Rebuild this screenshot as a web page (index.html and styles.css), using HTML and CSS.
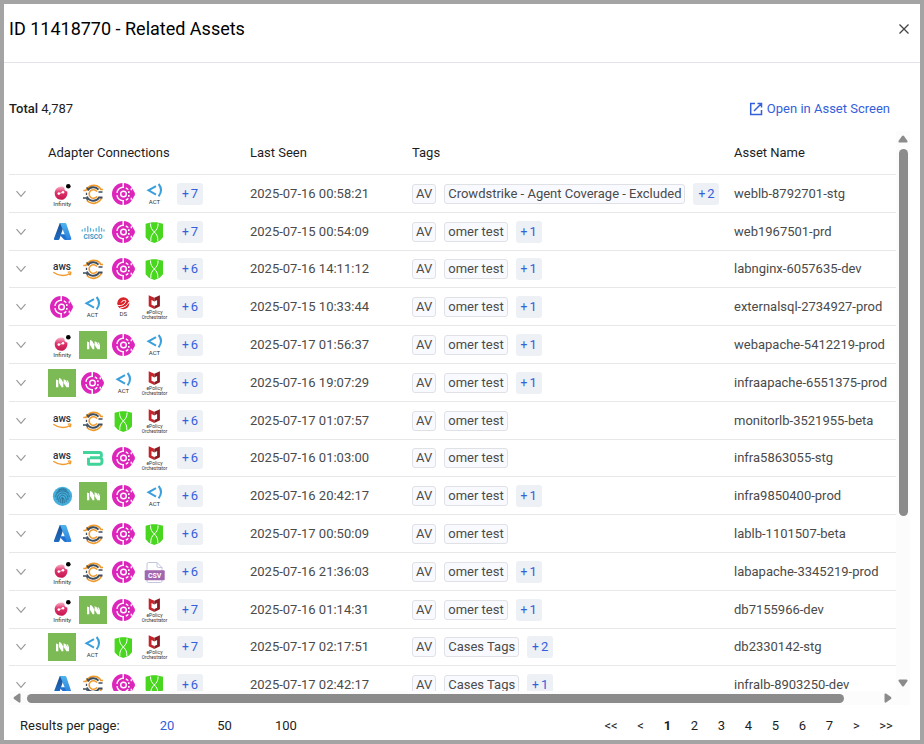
FILE: index.html
```html
<!DOCTYPE html>
<html lang="en">
<head>
<meta charset="utf-8">
<meta name="viewport" content="width=device-width, initial-scale=1">
<title>Related Assets</title>
<link rel="stylesheet" href="styles.css">
</head>
<body>
<svg class="gradients" aria-hidden="true">
  <defs>
    <linearGradient id="g-inf" x1="0" y1="0" x2="0" y2="1"><stop offset="0" stop-color="#f6b3c6"/><stop offset=".45" stop-color="#e0326d"/><stop offset="1" stop-color="#c4174f"/></linearGradient>
    <linearGradient id="g-az1" x1="0" y1="0" x2="0" y2="1"><stop offset="0" stop-color="#1a4f94"/><stop offset="1" stop-color="#1e6cc0"/></linearGradient>
    <linearGradient id="g-az2" x1="0" y1="0" x2="0" y2="1"><stop offset="0" stop-color="#4fb4ee"/><stop offset="1" stop-color="#2a7fdc"/></linearGradient>
  </defs>
</svg>
<svg class="sprite" aria-hidden="true">
  <symbol id="infinity" viewBox="0 0 28 28">
    <path fill="url(#g-inf)" d="M13 6.500c1.500 0 2.600.5 3.500 1.300-.4 1.900.6 3.300 2.800 3.600.8 4.500-2 8.300-6.100 8.300-3.700 0-6.500-2.900-6.500-6.500S9.500 6.500 13 6.500z"/>
    <circle cx="10.800" cy="13.600" r="1.300" fill="#fff"/><circle cx="15" cy="12.300" r="1.300" fill="#fff"/>
    <path d="M11 13.600l4-1.300" stroke="#fff" stroke-width=".8"/>
    <circle cx="20.300" cy="6.300" r="2.300" fill="#000"/>
    <text class="mark" x="14.300" y="25.500" font-size="6">Infinity</text>
  </symbol>
  <symbol id="chain" viewBox="0 0 28 28">
    <g fill="none">
      <path stroke="#f09a2c" stroke-width="1.700" d="M4.300 10.500h2.500A9 9 0 0 1 20.500 7.300M22.700 17.500A9 9 0 0 1 7.800 20.500M20.500 7.300l1.200 2.200h2.300"/>
      <path stroke="#3f4e5e" stroke-width="1.900" d="M19.500 9.700A6.700 6.700 0 0 0 8.600 10.500M8 16.500a6.700 6.700 0 0 0 12 1h3.500"/>
      <path stroke="#3f4e5e" stroke-width="1.300" d="M7.500 12.800v2.200M4 18h3.200l1.500 2.300M19.500 12h4M7.500 7.500l2 1.500"/>
      <path stroke="#f09a2c" stroke-width="1.600" d="M18 11.600a4.300 4.300 0 1 0 0 4.800"/>
    </g>
  </symbol>
  <symbol id="orbit" viewBox="0 0 28 28">
    <path fill="#dc25bb" d="M13 3c3.800 0 6.200 1.300 8 3.500l3.600 6.100c.5.900.5 1.900 0 2.800L21 21.500c-1.800 2.200-4.200 3.500-8 3.500A11 11 0 0 1 13 3z"/>
    <path fill="none" stroke="#fff" stroke-width="1.400" d="M12.800 7.200a6.900 6.900 0 0 0-5.900 5.600M6.900 15.200a6.900 6.900 0 0 0 5.900 5.600M15.800 7.800a6.900 6.900 0 0 1 2.400 1.900M15.800 20.200a6.900 6.900 0 0 0 2.400-1.900"/>
    <path fill="#fff" d="M12.500 2.500h1.500v5.500h-1.500zM12.500 20h1.500v5.500h-1.500z"/>
    <circle cx="13.500" cy="14" r="2.800" fill="none" stroke="#fff" stroke-width="1.400"/>
    <path fill="#fff" d="M18 11.300h1.600v1.600H18zM18 15.100h1.600v1.600H18zM20.600 8.300h1.400v2h-1.400zM20.600 17.700h1.400v2h-1.400z"/>
  </symbol>
  <symbol id="act" viewBox="0 0 28 28">
    <path fill="none" stroke="#3a9fdd" stroke-width="2" d="M15 6.200L7.500 10.300l7.500 4.300M17.600 4c3 3.700 3 8.500 0 12.300"/>
    <text class="mark" x="13.500" y="23.700" font-size="6">ACT</text>
  </symbol>
  <symbol id="azure" viewBox="0 0 28 28">
    <path fill="url(#g-az1)" d="M11.800 5h5L11.400 21.200c-.2.500-.6.800-1.100.8H7c-.8 0-1.300-.7-1-1.500z"/>
    <path fill="#1e6fce" d="M18.800 16.200H11l5 5.300c.4.300.8.500 1.300.5h3.500z"/>
    <path fill="url(#g-az2)" d="M12 5h5.200c.5 0 .9.300 1.100.8l5 14.800c.2.700-.3 1.400-1.100 1.400h-4.800c.8 0 1.200-.7 1-1.500z"/>
  </symbol>
  <symbol id="cisco" viewBox="0 0 28 28">
    <path stroke="#5db3da" stroke-width="1.300" stroke-linecap="round" d="M3.200 11.800v1.200M6 10.500v2.500M8.800 8.700v5M11.600 10.500v2.500M14.400 11.800v1.200M17.200 10.500v2.500M20 8.700v5M22.600 10.500v2.500M25 11.800v1.200"/>
    <text class="mark mark-cisco" x="14" y="20.500" font-size="6.500">CISCO</text>
  </symbol>
  <symbol id="shield" viewBox="0 0 28 28">
    <path fill="#49d61f" d="M13.300 4.200c2.900 0 5.900.5 8.700 1.600v13.400l-3.300 3.500-5.400 2.300-5.400-2.300-3.300-3.500V5.800c2.800-1.100 5.800-1.600 8.700-1.600z"/>
    <path fill="none" stroke="#fff" stroke-width="1" d="M9.500 5.500c0 4 1 5.800 3.800 8.500s3.700 4.800 3.500 9M17.100 5.500c0 4-1 5.800-3.800 8.500s-3.700 4.800-3.500 9"/>
  </symbol>
  <symbol id="aws" viewBox="0 0 28 28">
    <text class="mark mark-aws" x="14" y="14.500" font-size="10">aws</text>
    <path fill="none" stroke="#f09a2c" stroke-width="1.400" d="M5.300 17.300c5 3.600 11.500 3.900 16.600 1.300M19.800 17.300c1-.5 2.300-.5 3 0 .1 1.100-.4 2.200-1.200 3"/>
  </symbol>
  <symbol id="trend" viewBox="0 0 28 28">
    <circle cx="13.300" cy="10.300" r="6" fill="#d9242b"/>
    <path fill="none" stroke="#fff" stroke-width="1" d="M7.300 12.500c4.500.5 7.500-1 8.700-4.500-1.800-1.200-4-.3-4.800 1.500M10 15c4.500-.3 7.500-2.500 9-6"/>
    <text class="mark" x="13.300" y="22.500" font-size="6">DS</text>
  </symbol>
  <symbol id="epolicy" viewBox="0 0 28 28">
    <path fill="#c4262b" d="M7.700 2.200l5.600 2.600v3.700l-2.800-1.400v4.600l2.800 1.300v2.900l-5.600-2.600z"/>
    <path fill="#8b1b22" d="M18.900 2.200l-5.600 2.600v3.700l2.800-1.400v4.600L13.300 13v2.900l5.600-2.600z"/>
    <text class="mark" x="13.500" y="21.300" font-size="5">ePolicy</text>
    <text class="mark" x="13.500" y="25.800" font-size="4.600">Orchestrator</text>
  </symbol>
  <symbol id="mosaic" viewBox="0 0 28 28">
    <path fill="#7cba56" d="M0 0h28v28H0z"/>
    <path fill="#fff" d="M8 10.500l2.300.8v7H8zM11 9l2 .8 2.300 3.700v4.800h-1.600L11 14zM15.600 10.300l1.800.8 3.600 5.200v2h-2.600l-2.800-4.300zM18.400 11l1.600.8 1 2.500v3z"/>
  </symbol>
  <symbol id="beta" viewBox="0 0 28 28">
    <path fill="none" stroke="#40d49b" stroke-width="2.900" stroke-linejoin="round" d="M4 8.500h16.500c2.600 0 2.600 5.200 0 5.200H11M20.500 13.700c3.400 0 3.400 6.600 0 6.600h-11v-6.500"/>
  </symbol>
  <symbol id="finger" viewBox="0 0 28 28">
    <circle cx="14.500" cy="14.300" r="9.600" fill="#43aedb"/>
    <g fill="none" stroke="#2c6688" stroke-width=".8">
      <path d="M8.500 11.200c2.500-4.700 9.500-4.700 12 0M7.700 15c.3-8 13.300-8 13.600 0M9.200 18c-1.300-9 12-9.500 10.700 0M11 20c-1.700-8 8-10 7.200 0M12.900 21c-1.400-7 3.600-7.500 3.400 0M14.600 15.500v6M10.500 7.800c2.500-1.400 5.700-1.400 8 0"/>
    </g>
  </symbol>
  <symbol id="csv" viewBox="0 0 28 28">
    <path fill="#fff" stroke="#bcbfd8" stroke-width=".9" d="M7.500 4.500h8.500l5 5v13.500q0 1.500-1.500 1.500h-12q-1.500 0-1.500-1.500v-17q0-1.500 1.500-1.500zM16 4.500v3.500q0 1.500 1.500 1.500h3.500"/>
    <rect x="3.700" y="12.300" width="20" height="10" rx="1" fill="#a167ae"/>
    <text class="mark mark-csv" x="13.700" y="19.800" font-size="7">CSV</text>
  </symbol>
  <symbol id="chev" viewBox="0 0 12 8"><path fill="none" stroke="#9a9a9a" stroke-width="1.200" d="M1.500 1.200L6 6.300l4.500-5.100"/></symbol>
</svg>

<main class="dialog">
  <header class="dialog-head">
    <h1>ID 11418770 - Related Assets</h1>
    <button class="close" type="button" aria-label="Close"><svg viewBox="0 0 12 12" width="12" height="12"><path stroke="#444" stroke-width="1.300" d="M1.500 1.500l9 9M10.500 1.500l-9 9"/></svg></button>
  </header>

  <div class="toolbar">
    <p class="total"><b>Total</b> 4,787</p>
    <a class="open" href="#"><svg viewBox="0 0 14 14" width="14" height="14"><path fill="none" stroke="#3460dc" stroke-width="1.500" d="M6 1.500H1.700v11h10.800V8M8.500 1.500h4v4M12.500 1.500L5 9"/></svg>Open in Asset Screen</a>
  </div>

  <div class="scroller">
    <div class="viewport">
      <table>
        <colgroup><col class="c-exp"><col class="c-adp"><col class="c-seen"><col class="c-tags"><col></colgroup>
        <thead><tr><th></th><th>Adapter Connections</th><th>Last Seen</th><th>Tags</th><th>Asset Name</th></tr></thead>
        <tbody>
          <tr><td><button class="exp" type="button" aria-label="Expand"><svg><use href="#chev"/></svg></button></td><td><div class="icons"><svg><use href="#infinity"/></svg><svg><use href="#chain"/></svg><svg><use href="#orbit"/></svg><svg><use href="#act"/></svg><button class="more" type="button"><span>+</span>7</button></div></td><td>2025-07-16 00:58:21</td><td><div class="tags"><span class="tag">AV</span><span class="tag">Crowdstrike - Agent Coverage - Excluded</span><button class="more" type="button"><span>+</span>2</button></div></td><td>weblb-8792701-stg</td></tr>
          <tr><td><button class="exp" type="button" aria-label="Expand"><svg><use href="#chev"/></svg></button></td><td><div class="icons"><svg><use href="#azure"/></svg><svg><use href="#cisco"/></svg><svg><use href="#orbit"/></svg><svg><use href="#shield"/></svg><button class="more" type="button"><span>+</span>7</button></div></td><td>2025-07-15 00:54:09</td><td><div class="tags"><span class="tag">AV</span><span class="tag">omer test</span><button class="more" type="button"><span>+</span>1</button></div></td><td>web1967501-prd</td></tr>
          <tr><td><button class="exp" type="button" aria-label="Expand"><svg><use href="#chev"/></svg></button></td><td><div class="icons"><svg><use href="#aws"/></svg><svg><use href="#chain"/></svg><svg><use href="#orbit"/></svg><svg><use href="#shield"/></svg><button class="more" type="button"><span>+</span>6</button></div></td><td>2025-07-16 14:11:12</td><td><div class="tags"><span class="tag">AV</span><span class="tag">omer test</span><button class="more" type="button"><span>+</span>1</button></div></td><td>labnginx-6057635-dev</td></tr>
          <tr><td><button class="exp" type="button" aria-label="Expand"><svg><use href="#chev"/></svg></button></td><td><div class="icons"><svg><use href="#orbit"/></svg><svg><use href="#act"/></svg><svg><use href="#trend"/></svg><svg><use href="#epolicy"/></svg><button class="more" type="button"><span>+</span>6</button></div></td><td>2025-07-15 10:33:44</td><td><div class="tags"><span class="tag">AV</span><span class="tag">omer test</span><button class="more" type="button"><span>+</span>1</button></div></td><td>externalsql-2734927-prod</td></tr>
          <tr><td><button class="exp" type="button" aria-label="Expand"><svg><use href="#chev"/></svg></button></td><td><div class="icons"><svg><use href="#infinity"/></svg><svg><use href="#mosaic"/></svg><svg><use href="#orbit"/></svg><svg><use href="#act"/></svg><button class="more" type="button"><span>+</span>6</button></div></td><td>2025-07-17 01:56:37</td><td><div class="tags"><span class="tag">AV</span><span class="tag">omer test</span><button class="more" type="button"><span>+</span>1</button></div></td><td>webapache-5412219-prod</td></tr>
          <tr><td><button class="exp" type="button" aria-label="Expand"><svg><use href="#chev"/></svg></button></td><td><div class="icons"><svg><use href="#mosaic"/></svg><svg><use href="#orbit"/></svg><svg><use href="#act"/></svg><svg><use href="#epolicy"/></svg><button class="more" type="button"><span>+</span>6</button></div></td><td>2025-07-16 19:07:29</td><td><div class="tags"><span class="tag">AV</span><span class="tag">omer test</span><button class="more" type="button"><span>+</span>1</button></div></td><td>infraapache-6551375-prod</td></tr>
          <tr><td><button class="exp" type="button" aria-label="Expand"><svg><use href="#chev"/></svg></button></td><td><div class="icons"><svg><use href="#aws"/></svg><svg><use href="#chain"/></svg><svg><use href="#shield"/></svg><svg><use href="#epolicy"/></svg><button class="more" type="button"><span>+</span>6</button></div></td><td>2025-07-17 01:07:57</td><td><div class="tags"><span class="tag">AV</span><span class="tag">omer test</span></div></td><td>monitorlb-3521955-beta</td></tr>
          <tr><td><button class="exp" type="button" aria-label="Expand"><svg><use href="#chev"/></svg></button></td><td><div class="icons"><svg><use href="#aws"/></svg><svg><use href="#beta"/></svg><svg><use href="#orbit"/></svg><svg><use href="#epolicy"/></svg><button class="more" type="button"><span>+</span>6</button></div></td><td>2025-07-16 01:03:00</td><td><div class="tags"><span class="tag">AV</span><span class="tag">omer test</span></div></td><td>infra5863055-stg</td></tr>
          <tr><td><button class="exp" type="button" aria-label="Expand"><svg><use href="#chev"/></svg></button></td><td><div class="icons"><svg><use href="#finger"/></svg><svg><use href="#mosaic"/></svg><svg><use href="#orbit"/></svg><svg><use href="#act"/></svg><button class="more" type="button"><span>+</span>6</button></div></td><td>2025-07-16 20:42:17</td><td><div class="tags"><span class="tag">AV</span><span class="tag">omer test</span><button class="more" type="button"><span>+</span>1</button></div></td><td>infra9850400-prod</td></tr>
          <tr><td><button class="exp" type="button" aria-label="Expand"><svg><use href="#chev"/></svg></button></td><td><div class="icons"><svg><use href="#azure"/></svg><svg><use href="#chain"/></svg><svg><use href="#orbit"/></svg><svg><use href="#shield"/></svg><button class="more" type="button"><span>+</span>6</button></div></td><td>2025-07-17 00:50:09</td><td><div class="tags"><span class="tag">AV</span><span class="tag">omer test</span></div></td><td>lablb-1101507-beta</td></tr>
          <tr><td><button class="exp" type="button" aria-label="Expand"><svg><use href="#chev"/></svg></button></td><td><div class="icons"><svg><use href="#infinity"/></svg><svg><use href="#chain"/></svg><svg><use href="#orbit"/></svg><svg><use href="#csv"/></svg><button class="more" type="button"><span>+</span>6</button></div></td><td>2025-07-16 21:36:03</td><td><div class="tags"><span class="tag">AV</span><span class="tag">omer test</span><button class="more" type="button"><span>+</span>1</button></div></td><td>labapache-3345219-prod</td></tr>
          <tr><td><button class="exp" type="button" aria-label="Expand"><svg><use href="#chev"/></svg></button></td><td><div class="icons"><svg><use href="#infinity"/></svg><svg><use href="#mosaic"/></svg><svg><use href="#orbit"/></svg><svg><use href="#epolicy"/></svg><button class="more" type="button"><span>+</span>7</button></div></td><td>2025-07-16 01:14:31</td><td><div class="tags"><span class="tag">AV</span><span class="tag">omer test</span><button class="more" type="button"><span>+</span>1</button></div></td><td>db7155966-dev</td></tr>
          <tr><td><button class="exp" type="button" aria-label="Expand"><svg><use href="#chev"/></svg></button></td><td><div class="icons"><svg><use href="#mosaic"/></svg><svg><use href="#act"/></svg><svg><use href="#shield"/></svg><svg><use href="#epolicy"/></svg><button class="more" type="button"><span>+</span>7</button></div></td><td>2025-07-17 02:17:51</td><td><div class="tags"><span class="tag">AV</span><span class="tag">Cases Tags</span><button class="more" type="button"><span>+</span>2</button></div></td><td>db2330142-stg</td></tr>
          <tr><td><button class="exp" type="button" aria-label="Expand"><svg><use href="#chev"/></svg></button></td><td><div class="icons"><svg><use href="#azure"/></svg><svg><use href="#chain"/></svg><svg><use href="#orbit"/></svg><svg><use href="#shield"/></svg><button class="more" type="button"><span>+</span>6</button></div></td><td>2025-07-17 02:42:17</td><td><div class="tags"><span class="tag">AV</span><span class="tag">Cases Tags</span><button class="more" type="button"><span>+</span>1</button></div></td><td>infralb-8903250-dev</td></tr>
        </tbody>
      </table>
    </div>
    <div class="bar bar-v" aria-hidden="true">
      <svg viewBox="0 0 10 8" width="10" height="8"><path fill="#8b8b8b" d="M4 1q1-1 2 0l3.500 5q.5 1.500-1 1.500h-7q-1.500 0-1-1.500z"/></svg>
      <div class="track"><div class="thumb"></div></div>
      <svg viewBox="0 0 10 8" width="10" height="8"><path fill="#8b8b8b" d="M4 7q1 1 2 0l3.500-5q.5-1.500-1-1.500h-7q-1.500 0-1 1.500z"/></svg>
    </div>
    <div class="bar bar-h" aria-hidden="true">
      <svg viewBox="0 0 8 10" width="8" height="10"><path fill="#8b8b8b" d="M1 4q-1 1 0 2l5 3.500q1.500.5 1.500-1v-7q0-1.500-1.500-1z"/></svg>
      <div class="track"><div class="thumb"></div></div>
      <svg viewBox="0 0 8 10" width="8" height="10"><path fill="#8b8b8b" d="M7 4q1 1 0 2l-5 3.500q-1.500.5-1.500-1v-7q0-1.500 1.500-1z"/></svg>
    </div>
    <div class="corner"></div>
  </div>

  <footer class="foot">
    <div class="sizes"><span class="sizes-label">Results per page:</span><button class="size on" type="button">20</button><button class="size" type="button">50</button><button class="size" type="button">100</button></div>
    <nav class="pages" aria-label="Pages"><button class="wide" type="button">&lt;&lt;</button><button type="button">&lt;</button><button class="on" type="button">1</button><button type="button">2</button><button type="button">3</button><button type="button">4</button><button type="button">5</button><button type="button">6</button><button type="button">7</button><button type="button">&gt;</button><button class="wide" type="button">&gt;&gt;</button></nav>
  </footer>
</main>
</body>
</html>
```
FILE: styles.css
```css
* { box-sizing: border-box; }

body {
  margin: 0;
  font: 13px/20px Roboto, "Liberation Sans", sans-serif;
  color: #1d1d1d;
  background: #fff;
}

button {
  margin: 0;
  padding: 0;
  border: 0;
  background: none;
  font: inherit;
  color: inherit;
}

.gradients { position: absolute; width: 0; height: 0; }
.sprite { display: none; }

.mark { font-family: Roboto, sans-serif; text-anchor: middle; fill: #333; }
.mark-cisco { font-weight: 700; fill: #2f9bcb; }
.mark-aws { font-weight: 500; fill: #252f3e; }
.mark-csv { font-weight: 700; fill: #fff; }

.dialog {
  display: flex;
  flex-direction: column;
  height: 100vh;
  border: 4px solid #a4a4a4;
}

.dialog-head {
  display: flex;
  align-items: center;
  justify-content: space-between;
  padding: 0 10px 8px 5px;
  height: 59px;
  border-bottom: 1px solid #e1e2ea;
}
h1 { margin: 0; font-size: 18px; font-weight: 400; line-height: 24px; color: #000; }
.close { display: flex; }

.toolbar {
  display: flex;
  align-items: center;
  justify-content: space-between;
  padding: 24px 30px 0 5px;
  height: 68px;
}
.total { margin: 0; }
.total b { font-weight: 500; }
.open { display: flex; align-items: center; gap: 4px; color: #3460dc; text-decoration: none; }

.scroller {
  flex: 1;
  min-height: 0;
  display: grid;
  grid-template: minmax(0, 1fr) 14px / minmax(0, 1fr) 14px;
  padding: 0 10px 0 5px;
}
.viewport { overflow: hidden; }

.bar { display: flex; align-items: center; background: #fcfcfc; }
.bar svg { flex: none; }
.bar-v { flex-direction: column; padding: 4px 0; }
.bar-h { padding: 0 4px; }
.track { flex: 1; }
.thumb { border-radius: 5px; background: #8b8b8b; }
.bar-v .track { margin: 6px 0; }
.bar-v .thumb { width: 9px; height: 70%; }
.bar-h .track { margin: 0 6px; }
.bar-h .thumb { width: 96%; height: 9px; }
.corner { background: #fcfcfc; }

table { width: 100%; table-layout: fixed; border-collapse: separate; border-spacing: 0; }
.c-exp { width: 39px; }
.c-adp { width: 202px; }
.c-seen { width: 162px; }
.c-tags { width: 322px; }
th, td { padding: 0; text-align: left; white-space: nowrap; border-bottom: 1px solid #e7e7e7; }
th { height: 44px; font-weight: 400; }
td { height: 38px; color: #4a4a4a; }
/* The row pitch is a little under 38px. */
tbody tr:nth-child(5n + 3) td { height: 37px; }

.exp { display: flex; padding: 0 6px; }
.exp svg { width: 12px; height: 8px; }

.icons { display: flex; align-items: center; gap: 3px; }
.icons svg { width: 28px; height: 28px; }
.icons .more { margin-left: 5px; }

.tags { display: flex; align-items: center; gap: 8px; }
.tag {
  padding: 0 3px;
  border: 1px solid #dfe1e5;
  border-radius: 3px;
  background: #f9faff;
  line-height: 18px;
}
.more {
  display: flex;
  align-items: center;
  justify-content: center;
  gap: 2px;
  width: 26px;
  height: 22px;
  border-radius: 3px;
  background: #edf0f5;
  color: #3460dc;
}
.more span { font-size: 12px; }

.foot {
  display: flex;
  align-items: center;
  justify-content: space-between;
  height: 35px;
  padding: 6px 18px 0 16px;
}
.sizes { display: flex; }
.sizes-label { margin-right: 40px; }
.size { margin-right: 43px; }
.size.on { color: #3460dc; }
.pages { display: flex; }
.pages button { width: 27px; }
.pages .wide { width: 32px; }
.pages .on { font-weight: 700; }
```
